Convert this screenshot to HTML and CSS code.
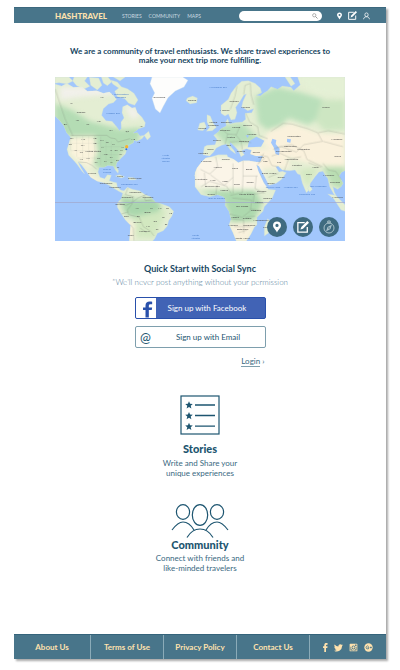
FILE: index.html
```html
<!DOCTYPE html>
<html lang="en">
<head>
<meta charset="utf-8">
<meta name="viewport" content="width=device-width, initial-scale=1">
<title>HashTravel</title>
<link rel="stylesheet" href="styles.css">
</head>
<body>
<svg class="sprite" aria-hidden="true">
  <symbol id="pin" viewBox="0 0 10 14"><path fill="currentColor" fill-rule="evenodd" d="M5 0C2 0 0 2 0 5c0 3 3.500 5 5 9 1.500-4 5-6 5-9 0-3-2-5-5-5zm0 3a2 2 0 1 1 0 4 2 2 0 0 1 0-4z"/></symbol>
  <symbol id="edit" viewBox="0 0 14 14"><path fill="none" stroke="currentColor" stroke-width="1.500" d="M9 2H1v11h11V7"/><path fill="currentColor" d="M12 0l2 2-7 7-3 1 1-3z"/></symbol>
  <symbol id="user" viewBox="0 0 14 14"><g fill="none" stroke="currentColor" stroke-width="1.500"><ellipse cx="7" cy="4.500" rx="3.300" ry="3.700"/><path d="M1 13.500c1-4 3-5 6-5s5 1 6 5"/></g></symbol>
</svg>
<div class="page">
  <header class="topbar">
    <a class="brand" href="#">HASHTRAVEL</a>
    <nav class="nav">
      <a href="#">STORIES</a>
      <a href="#">COMMUNITY</a>
      <a href="#">MAPS</a>
    </nav>
    <form class="search">
      <input type="search" aria-label="Search">
      <button type="button" aria-label="Search"><svg viewBox="0 0 12 12"><g fill="none" stroke="currentColor"><circle cx="4.500" cy="4.500" r="3.300" stroke-width="1.500"/><path d="M7 7l4 4" stroke-width="2"/></g></svg></button>
    </form>
    <div class="tools">
      <a class="tool-pin" href="#" aria-label="Places"><svg><use href="#pin"/></svg></a>
      <a class="tool-edit" href="#" aria-label="Write"><svg><use href="#edit"/></svg></a>
      <a class="tool-user" href="#" aria-label="Profile"><svg><use href="#user"/></svg></a>
    </div>
  </header>

  <main>
    <p class="intro">We are a community of travel enthusiasts. We share travel experiences to<br>make your next trip more fulfilling.</p>

    <div class="map">
      <svg class="world" viewBox="15 21 870 492" role="img" aria-label="World map">
        <defs>
          <filter id="soft" x="-50%" y="-50%" width="200%" height="200%" color-interpolation-filters="sRGB"><feGaussianBlur stdDeviation="8"/></filter>
          <clipPath id="west"><path id="west-land" d="M15 42L35 48 50 40 70 52 96 50 112 64 140 62 160 70 178 66 190 76 200 88 190 98 176 102 160 116 155 136 168 152 186 154 200 170 208 182 214 176 213 156 222 144 216 128 218 110 232 104 246 114 256 112 262 128 276 142 286 158 284 170 266 176 248 190 262 188 270 198 284 196 276 206 260 214 252 210 250 218 236 226 230 240 226 252 214 264 200 278 198 288 206 302 204 310 196 300 190 288 174 286 162 292 148 292 144 306 150 322 164 326 172 314 184 316 178 332 190 336 200 338 202 350 212 360 222 362 232 352 248 358 268 362 286 374 302 380 316 396 336 402 358 410 371 424 366 438 356 452 352 468 340 482 322 490 314 506 308 513 238 513 240 490 242 466 226 450 214 432 202 412 202 398 214 386 218 370 206 364 190 354 174 344 160 338 142 334 122 322 108 302 94 284 84 276 92 292 104 312 96 304 82 284 72 272 56 256 51 238 58 216 62 202 50 188 42 168 28 150 15 138Z"/></clipPath>
          <clipPath id="east"><path id="east-land" d="M450 21L308 21 316 44 296 62 288 52 262 48 248 58 228 50 218 62 206 70 196 78 184 76 200 68 196 54 180 40 160 32 140 34 124 48 108 70 100 88 78 106 78 130 90 138 100 132 108 150 120 148 126 128 122 112 134 96 146 76 154 72 144 94 140 110 158 122 176 116 170 128 150 130 152 148 142 156 120 158 104 162 98 146 92 156 94 168 78 176 70 186 56 196 66 208 60 224 36 226 28 230 24 254 44 258 56 246 64 234 80 226 94 222 106 240 122 252 118 242 104 226 106 216 120 230 130 242 138 260 148 254 140 242 154 236 170 240 166 252 184 258 204 258 196 276 184 276 162 272 144 272 130 278 116 268 98 260 96 254 70 254 50 260 32 264 20 276 6 294 0 308 0 350 18 374 44 380 68 374 86 380 92 392 90 406 102 424 108 448 102 464 114 488 124 513 154 513 168 492 178 472 186 464 186 442 204 424 208 410 232 384 242 360 220 358 206 338 190 304 184 284 192 288 206 314 222 346 244 340 260 328 274 308 262 304 252 306 242 290 250 288 262 300 284 302 300 300 308 312 316 314 322 340 334 368 342 360 346 340 360 320 372 306 384 304 392 318 398 324 404 350 416 372 428 386 418 366 414 350 428 358 438 350 444 340 432 318 440 306 450 302Z"/></clipPath>
        </defs>
        <rect x="15" y="21" width="870" height="492" fill="#a2c7fc"/>

        <g class="land">
          <use href="#west-land"/>
          <path d="M15 21h42l12 12-18 9-24-4-12 2zM72 21h40l-8 12 16 16-18 8-22-10-12-14zM118 22l28 2 10 22-14 14-20-14zM154 21h20l12 14-14 12-12-8zM182 30l20 6 12 14 18 6 20 14 12 20-10 16-18-6-12-14-22-6-8-16 12-10-18-12zM190 21h36l-16 12zM282 196l14-12 6 16-10 10zM196 318l12-4 16 6-10 4zM234 322l18 1 8 6-22 1zM412 84l16-6 14 6-2 14-20 4-12-10z"/>
          <path d="M434 316l16-28v58l-12-14z"/>
        </g>
        <path fill="#fdfdfc" stroke="#c8ddea" d="M306 21h92l16 10-12 20-26 12-22 20-14 26-10 20-14-12-10-32 8-16-14-28z"/>
        <g clip-path="url(#west)">
          <g filter="url(#soft)">
            <path fill="#b4dcb4" d="M15 100l54 22 50 32 40 10 54 14 62-5-12 46-50 30-8 42-42 16-32-24 0-52-70-24-46-28z"/>
            <path fill="#f1f0ea" d="M30 50h160v24l-90 6-70 10zM222 106l35 8 14 26-27 8z"/>
            <path fill="#faf3dc" d="M58 200l77-2 8 50-22 48-60-40zM94 284l36 34 48 22-60-8z"/>
            <path fill="#a9d6ac" d="M210 378l48 10 54-4 22 18-10 42-50 10-50-24z"/>
            <path fill="#d2e8c0" d="M252 440l100-22-38 86-60-2z"/>
            <path fill="#f9f2dd" d="M228 450l28 12-4 50-20 1z"/>
          </g>
        </g>

        <g transform="translate(435 0)">
          <g class="land">
            <use href="#east-land"/>
            <path d="M36 134l10 4 8 20 10 14-12 10-18 2 10-12-8-16zM14 160l14-4 6 14-10 12-16-2zM270 21h16l14 20-12 8zM344 346l8 12-8 8-6-10zM398 372l18 14 22 34 12 4v-20l-28-28zM218 446l8 8-6 36-12 8 0-28z"/>
          </g>
          <g clip-path="url(#east)">
            <g filter="url(#soft)">
              <path fill="#b9dfba" d="M180 80l64-28 76 16 70 22v42l-50 32-60-20-46 48-44-34zM44 170l100-10 54 52-100 18z"/>
              <path fill="#cde6c2" d="M380 90h70v90l-60 2-30-30z"/>
              <path fill="#e4f0d5" d="M300 21h150v60l-90-10z"/>
              <path fill="#faf1dc" d="M224 178l62-20 80 30 84 4v106l-44-8-70-12-86-22-50-36zM150 232l110 8 30 54-110 2z"/>
              <path fill="#fbf5e8" d="M0 262l188 4 34 88-46 6-176-10z"/>
              <path fill="#add9ae" d="M16 364l164-4 22 42-30 60-56 16-30-90z"/>
              <path fill="#f9f1dc" d="M104 458l76-4-18 59h-46z"/>
              <path fill="#d3e8c1" d="M312 300l60-8-34 60z"/>
              <path fill="#b9ddb2" d="M382 290l68 0v70l-40-14z"/>
            </g>
          </g>
          <path class="water" d="M232 206l12 4-2 12 12 14-2 20-10-4-6-20-8-14zM184 200l24 12-10 18-40 2 4-18zM276 206l12 2-2 10-10-2zM152 196h10l-4 8z"/>
        </g>

        <g class="borders">
          <path d="M62 196h108l12 8 14 2 8 10 36-10M15 56l30 90 24 52M86 276l24 2 16 8 14 12M234 354l-8 20 24 6-4 22M202 398l26 8 18-8 18-14 28-12M282 376l4 16 20-2M246 402l-14 18 4 14 32 8 12 28 22 14 10 14M242 464l8 12 2 36M270 474l20 14M214 432l20-6"/>
          <path transform="translate(435 0)" d="M126 48l-6 30-14 40M146 74l4-28 16-6 2 34 8 30M152 130l12 26 24 14 4 26 26 10M80 178l18 14 26 2 10-24M98 192l-8 30M122 194l16 20 30 4M104 216l34-2 4 24M228 184l36-24 26 2 48 14 30 12 14 26-56 10-22 22-46-16-24 8M370 188l30-6 50 10M384 214l60 16M244 232l46-8 36 18 10 26 46 22M196 256l22 4 12 26 18 4M230 258l26-8 34 16 28-6M268 302l12-34M340 278l38 14M384 280l16 20 22 4 16 24M62 260l6 30-24 22-28-14M46 314l42 32 26-24V280M114 322v48M144 272v46h44M144 318l-2 50-36 8M18 350l26-16 50 14 14 22M28 308l4 42M66 344l-4 34M184 318l-4 38 30 14M154 370l24 2 28-4M178 372l-4 26 32 2M112 384l58 6-4 32-24 20-38-10M106 446l40 4v40M118 470h48M150 442l30-4M166 416l30 6M130 488l26-8M186 284l24-20M220 322l30-12M190 280l16-30"/>
        </g>
        <path class="states" d="M62 205v36M80 200v60M98 198v66M116 198v76M134 198v72M60 220h88M62 242h90M82 264h68M152 200v86M168 210v74M184 214v70M154 230h62M156 254h66M170 270h38"/>
        <path d="M15 397.500h870" stroke="#a0a5c7" stroke-width="2"/>
        <circle cx="230" cy="230" r="5" fill="#f6b52e"/><circle cx="229" cy="238" r="3" fill="#326de2"/>

        <g class="places">
          <text x="93" y="130">Canada</text><text x="130" y="245">United States</text><text x="126" y="312">Mexico</text><text x="328" y="84">Greenland</text><text x="426" y="92">Iceland</text><text x="210" y="320">Cuba</text><text x="254" y="327">Puerto Rico</text><text x="168" y="342">Guatemala</text><text x="194" y="355">Nicaragua</text><text x="256" y="369">Venezuela</text><text x="231" y="385">Colombia</text><text x="294" y="384">Suriname</text><text x="211" y="405">Ecuador</text><text x="293" y="430">Brazil</text><text x="229" y="442">Peru</text><text x="262" y="460">Bolivia</text><text x="284" y="486">Paraguay</text><text x="242" y="499">Chile</text>
          <g transform="translate(435 0)"><text x="393" y="114">Russia</text><text x="117" y="96">Sweden</text><text x="90" y="123">Norway</text><text x="152" y="115">Finland</text><text x="94" y="158">Denmark</text><text x="55" y="159">United</text><text x="55" y="168">Kingdom</text><text x="22" y="176">Ireland</text><text x="90" y="184">Germany</text><text x="124" y="175">Poland</text><text x="158" y="169">Belarus</text><text x="171" y="195">Ukraine</text><text x="66" y="213">France</text><text x="108" y="204">Austria</text><text x="147" y="215">Romania</text><text x="101" y="228">Italy</text><text x="46" y="239">Spain</text><text x="25" y="251">Portugal</text><text x="138" y="246">Greece</text><text x="184" y="248">Turkey</text><text x="297" y="202">Kazakhstan</text><text x="426" y="210">Mongolia</text><text x="286" y="232">Uzbekistan</text><text x="266" y="247">Turkmenistan</text><text x="326" y="240">Kyrgyzstan</text><text x="428" y="262">China</text><text x="289" y="270">Afghanistan</text><text x="306" y="287">Pakistan</text><text x="252" y="278">Iran</text><text x="211" y="275">Iraq</text><text x="198" y="265">Syria</text><text x="222" y="312">Saudi Arabia</text><text x="258" y="324">Oman</text><text x="227" y="342">Yemen</text><text x="341" y="316">India</text><text x="361" y="295">Nepal</text><text x="401" y="318">Myanmar</text><text x="420" y="340">Thailand</text><text x="428" y="385">Malaysia</text><text x="34" y="277">Morocco</text><text x="92" y="270">Tunisia</text><text x="68" y="294">Algeria</text><text x="120" y="298">Libya</text><text x="162" y="299">Egypt</text><text x="18" y="331">Mauritania</text><text x="54" y="333">Mali</text><text x="90" y="335">Niger</text><text x="125" y="345">Chad</text><text x="165" y="339">Sudan</text><text x="52" y="351">Burkina Faso</text><text x="87" y="364">Nigeria</text><text x="48" y="374">Ghana</text><text x="155" y="374">South Sudan</text><text x="200" y="366">Ethiopia</text><text x="218" y="388">Somalia</text><text x="192" y="399">Kenya</text><text x="142" y="410">DR Congo</text><text x="183" y="422">Tanzania</text><text x="120" y="443">Angola</text><text x="156" y="446">Zambia</text><text x="198" y="454">Mozambique</text><text x="114" y="468">Namibia</text><text x="163" y="468">Zimbabwe</text><text x="143" y="481">Botswana</text><text x="143" y="508">South Africa</text><text x="224" y="475">Madagascar</text></g>
        </g>
        <g class="places small">
          <text x="64" y="101">YT</text><text x="155" y="84">NU</text><text x="46" y="165">BC</text><text x="82" y="154">AB</text><text x="114" y="166">SK</text><text x="146" y="156">MB</text><text x="183" y="184">ON</text><text x="232" y="185">QC</text><text x="274" y="170">NL</text><text x="65" y="207">WA</text><text x="100" y="209">MT</text><text x="134" y="206">ND</text><text x="156" y="212">MN</text><text x="172" y="219">WI</text><text x="190" y="225">MI</text><text x="61" y="224">OR</text><text x="76" y="244">NV</text><text x="94" y="250">UT</text><text x="98" y="228">WY</text><text x="135" y="222">SD</text><text x="158" y="233">IA</text><text x="184" y="242">IL</text><text x="199" y="242">OH</text><text x="215" y="244">PA</text><text x="218" y="233">NY</text><text x="94" y="270">AZ</text><text x="114" y="268">NM</text><text x="146" y="266">OK</text><text x="138" y="280">TX</text><text x="167" y="256">MO</text><text x="184" y="264">TN</text><text x="202" y="272">SC</text><text x="166" y="277">LA</text><text x="184" y="280">AL</text><text x="204" y="293">FL</text><text x="212" y="256">VA</text><text x="250" y="209">ME</text><text x="266" y="219">NS</text><text x="262" y="416">AM</text><text x="305" y="417">PA</text><text x="330" y="418">MA</text><text x="352" y="417">CE</text><text x="362" y="432">PE</text><text x="341" y="443">BA</text><text x="316" y="456">GO</text><text x="348" y="466">ES</text><text x="294" y="472">MS</text><text x="321" y="480">SP</text><text x="265" y="440">RO</text>
        </g>
        <g class="seas">
          <text x="189" y="132">Hudson Bay</text><text x="212" y="75">Northwestern</text><text x="212" y="84">Passages</text><text x="171" y="300">Gulf of</text><text x="171" y="309">Mexico</text><text x="238" y="346">Caribbean Sea</text><text x="347" y="258">North</text><text x="347" y="267">Atlantic</text><text x="347" y="276">Ocean</text><text x="437" y="498">South</text><text x="437" y="507">Atlantic</text><text x="504" y="55">Norwegian Sea</text><text x="722" y="354">Arabian Sea</text><text x="805" y="352">Bay of Bengal</text><text x="771" y="376">Laccadive Sea</text><text x="500" y="388">Gulf of Guinea</text><text x="669" y="354">Gulf of Aden</text>
        </g>
      </svg>
      <div class="map-actions">
        <button type="button" class="act-pin" aria-label="Drop a pin"><svg><use href="#pin"/></svg></button>
        <button type="button" class="act-edit" aria-label="Write a story"><svg><use href="#edit"/></svg></button>
        <button type="button" class="act-compass" aria-label="Explore"><svg viewBox="0 0 14 14"><g fill="none" stroke="currentColor"><circle cx="7" cy="8" r="5"/><path d="M5.800 1h2.400v2H5.800z"/></g><path fill="currentColor" fill-rule="evenodd" d="M10 4.500L8.500 9 4 11.500 5.500 7zM7 7.200a.8.800 0 1 0 0 1.600.8.800 0 0 0 0-1.600z"/></svg></button>
      </div>
    </div>

    <section class="signup">
      <h2>Quick Start with Social Sync</h2>
      <p class="note">*We’ll never post anything without your permission</p>
      <div class="choices">
        <button type="button" class="btn facebook">
          <span class="badge"><svg viewBox="0 0 12 19"><path fill="currentColor" d="M3 19v-9H0V7h3V5c0-3.500 2-5 5-5 1.500 0 3 .2 3 .2v3H9C7.500 3.200 7 4 7 5v2h4l-.5 3H7v9z"/></svg></span>
          <span class="label">Sign up with Facebook</span>
        </button>
        <button type="button" class="btn email">
          <span class="badge">@</span>
          <span class="label">Sign up with Email</span>
        </button>
        <a class="login" href="#"><span>Login</span> ›</a>
      </div>
    </section>

    <section class="feature stories">
      <svg viewBox="0 0 40 40" aria-hidden="true"><rect x="1" y="1" width="38" height="38" fill="none" stroke="currentColor" stroke-width="1.200"/>
        <defs><path id="star" d="M0-3.800L1.100-1.200 3.800-1 1.700.8 2.400 3.500 0 2-2.400 3.500-1.700.8-3.800-1-1.100-1.200z"/></defs>
        <g fill="currentColor"><use href="#star" x="9" y="10"/><use href="#star" x="9" y="20.800"/><use href="#star" x="9" y="31.500"/></g>
        <path d="M15 10h20M15 20.500h20M15 31.200h20" stroke="currentColor" stroke-width="1.300"/></svg>
      <h2>Stories</h2>
      <p>Write and Share your<br>unique experiences</p>
    </section>

    <section class="feature community">
      <svg viewBox="0 0 58 35" aria-hidden="true"><g fill="none" stroke="currentColor" stroke-width="1.200"><ellipse cx="12" cy="8" rx="6.600" ry="7.300"/><ellipse cx="29" cy="11" rx="7.700" ry="10.300"/><ellipse cx="46" cy="8" rx="6.600" ry="7.300"/><path d="M1 26c3-4 7-8 11-8s8 3 11 8M57 26c-3-4-7-8-11-8s-8 3-11 8M16 33.500c3-5 7-8.500 13-8.500s10 3.500 13 8.500"/></g></svg>
      <h2>Community</h2>
      <p>Connect with friends and<br>like-minded travelers</p>
    </section>
  </main>

  <footer class="footer">
    <a href="#">About Us</a>
    <a href="#">Terms of Use</a>
    <a href="#">Privacy Policy</a>
    <a href="#">Contact Us</a>
    <div class="social">
      <a class="fb" href="#" aria-label="Facebook"><svg viewBox="0 0 6 11"><path fill="currentColor" d="M1.500 11V6H0V4h1.500V2.500C1.500.8 2.500 0 4 0h1.500v2h-1c-.7 0-.9.300-.9.900V4h1.900l-.3 2H3.600v5z"/></svg></a>
      <a href="#" aria-label="Twitter"><svg viewBox="0 0 24 22"><path fill="currentColor" d="M24 4.600c-.9.400-1.800.7-2.800.8 1-.6 1.800-1.600 2.200-2.700-1 .6-2 1-3.100 1.200A4.900 4.900 0 0 0 11.900 8.400 14 14 0 0 1 1.700 3.200a4.900 4.900 0 0 0 1.500 6.600c-.8 0-1.600-.2-2.200-.6a4.900 4.900 0 0 0 3.900 4.900c-.7.200-1.500.2-2.200.1a4.900 4.900 0 0 0 4.600 3.400A9.900 9.900 0 0 1 0 19.600a14 14 0 0 0 21.500-12.400c1-.7 1.800-1.600 2.500-2.600z"/></svg></a>
      <a href="#" aria-label="Instagram"><svg viewBox="0 0 14 14"><path fill="currentColor" fill-rule="evenodd" d="M2 1h10a1 1 0 0 1 1 1v10a1 1 0 0 1-1 1H2a1 1 0 0 1-1-1V2a1 1 0 0 1 1-1zm7.500 1.500v2.300h2.200V2.500zM7 4a3 3 0 1 0 0 6 3 3 0 0 0 0-6zm-4.700 2v5.700h9.400V6h-1a4 4 0 1 1-7.500 0z"/><circle cx="7" cy="7" r="1.800" fill="currentColor"/></svg></a>
      <a href="#" aria-label="Google Plus"><svg viewBox="0 0 14 14"><circle cx="7" cy="7" r="6.500" fill="currentColor"/><path fill="none" stroke="#48758a" stroke-width="1.200" d="M7.300 5.500A2.300 2.300 0 1 0 7.800 7.300H5.500M9.200 7h3M10.700 5.500v3"/></svg></a>
    </div>
  </footer>
</div>
</body>
</html>
```
FILE: styles.css
```css
* { box-sizing: border-box; }

body {
  margin: 0;
  background: #fff;
  color: #1d5570;
  font: 8px/10px Lato, "Open Sans", sans-serif;
}

a { color: inherit; text-decoration: none; }
h2, p { margin: 0; }
button { font: inherit; color: inherit; padding: 0; border: 0; background: none; }
svg { display: block; width: 100%; height: 100%; }
.sprite { display: none; }

.page {
  display: flex;
  flex-direction: column;
  margin: 7px 14px 11px;
  background: #fff;
  box-shadow: 2px 2px 2px #aaa;
}

/* Top bar */
.topbar {
  display: flex;
  align-items: center;
  height: 16px;
  padding: 0 16px 0 41px;
  background: #48758a;
  border-top: 1px solid #3c687e;
  color: #fff;
}
.brand { color: #ffe2ae; font-size: 8px; font-weight: 900; }
.nav { display: flex; gap: 7px; margin-left: 15px; color: #cbdbe1; font-size: 5px; }
.search {
  display: flex;
  align-items: center;
  width: 83px;
  height: 10px;
  margin-left: auto;
  padding-right: 4px;
  border-radius: 5px;
  background: #fff;
}
.search input { flex: 1; min-width: 0; height: 8px; padding: 0 4px; border: 0; outline: 0; background: none; font: inherit; }
.search button { width: 6px; height: 6px; color: #999; }
.tools { display: flex; align-items: center; gap: 6px; margin-left: 15px; }
.tools .tool-pin { width: 5px; height: 8px; }
.tools .tool-edit { width: 9px; height: 9px; }
.tools .tool-user { width: 7px; height: 8px; }

/* Intro and map */
main { padding: 24px 41px 61px; text-align: center; }
.intro { color: #17465f; font-weight: 700; line-height: 9px; }
.map { position: relative; margin-top: 12px; }
.world { height: auto; }
.land { fill: #e4eed3; stroke: #c4dce0; stroke-width: 1; }
.water { fill: #a2c7fc; }
.borders { fill: none; stroke: #777b72; stroke-width: 1; opacity: .7; }
.states { fill: none; stroke: #9ba495; stroke-width: 1; opacity: .3; }
.places, .seas { font-size: 8px; text-anchor: middle; }
.places { fill: #444; }
.places.small { font-size: 7px; }
.seas { fill: #4b7fca; }
.map-actions { position: absolute; right: 6px; bottom: 4px; display: flex; gap: 6px; }
.map-actions button {
  display: flex;
  align-items: center;
  justify-content: center;
  width: 20px;
  height: 20px;
  border-radius: 50%;
  background: #3f6b80;
  color: #fff;
}
.map-actions svg { width: 12px; height: 12px; }
.map-actions .act-pin svg { width: 8px; }
.map-actions .act-compass svg { width: 14px; height: 14px; }
.map-actions .act-compass { color: #a9c1ca; }

/* Sign up */
.signup { margin-top: 22px; }
.signup h2 { color: #17465f; font-size: 9px; line-height: 12px; }
.note { margin-top: 1px; color: #55809a; font-weight: 300; line-height: 12px; }
.choices { display: flex; flex-direction: column; gap: 7px; width: 131px; margin: 9px auto 0; }
.btn { display: flex; height: 22px; border-radius: 2px; overflow: hidden; line-height: 20px; }
.btn .badge { width: 20px; }
.btn .label { flex: 1; padding-right: 6px; }
.facebook { border: 1px solid #2950ab; background: #4163b5; color: #fff; }
.facebook .badge { padding: 3px 3px 0 7px; background: #fff; color: #2950ab; }
.email { border: 1px solid #7e9fad; }
.email .badge { font-size: 13px; }
.email .label { padding-right: 4px; }
.login { align-self: flex-end; margin-top: 1px; padding-right: 1px; line-height: 10px; color: #396981; }
.login span { display: inline-block; border-bottom: 1px solid #7e9fad; }

/* Features */
.feature h2 { color: #1d5570; font-size: 11px; font-weight: 900; line-height: 13px; }
.feature p { color: #396981; }
.feature svg { margin: 0 auto; }
.stories { margin-top: 28px; }
.stories svg { width: 40px; height: 40px; }
.stories h2 { margin: 7px 0 3px; }
.community { margin-top: 26px; }
.community svg { width: 58px; height: 35px; }
.community h2 { margin: -1px 0 2px; }

/* Footer */
.footer {
  display: grid;
  grid-template-columns: 77fr 73fr 73fr 73fr 76fr;
  height: 25px;
  border-top: 1px solid #35647b;
  background: #48758a;
  color: #ffe2ae;
  font-weight: 700;
  line-height: 24px;
  text-align: center;
}
.footer > a { border-right: 1px solid #8babb8; }
.social { display: flex; align-items: center; justify-content: center; gap: 6px; }
.social a { width: 9px; height: 9px; }
.social .fb { width: 5px; }
```
